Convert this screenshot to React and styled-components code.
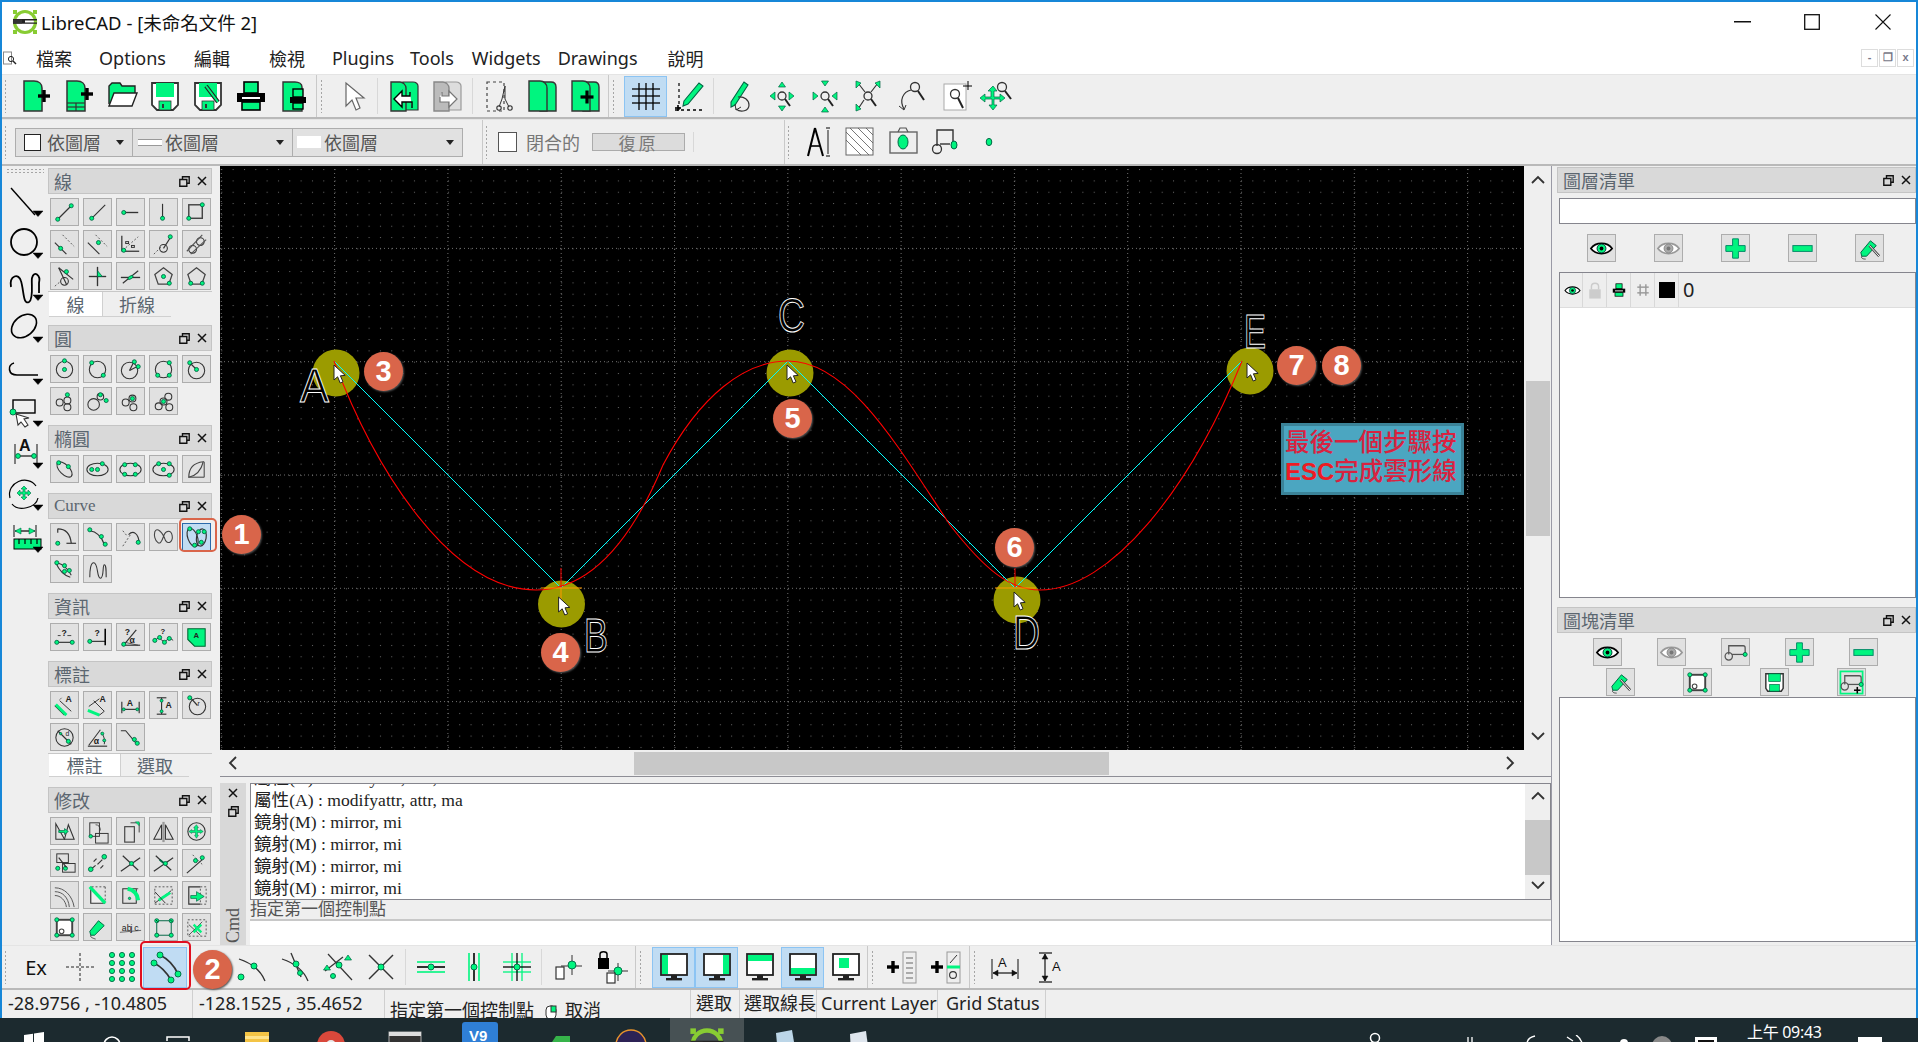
import React from 'react';
import styled, { createGlobalStyle } from 'styled-components';

const G = '#00f57f';
const K = '#333';
const g = (...c) => React.createElement('g', null, ...c);
const l = (a, b, c, e, s = K, w = 1.2, da) => <line x1={a} y1={b} x2={c} y2={e} stroke={s} strokeWidth={w} strokeDasharray={da} />;
const da = (a, b, c, e) => l(a, b, c, e, '#555', 1, '2 2');
const d = (x, y, rr = 2.1) => <circle cx={x} cy={y} r={rr} fill={G} stroke="#064" strokeWidth="0.9" />;
const o = (x, y, rr, s = K, w = 1.1, f = 'none') => <circle cx={x} cy={y} r={rr} fill={f} stroke={s} strokeWidth={w} />;
const e = (x, y, a, b, rot = 0, s = K, w = 1.1, f = 'none') => <ellipse cx={x} cy={y} rx={a} ry={b} fill={f} stroke={s} strokeWidth={w} transform={`rotate(${rot} ${x} ${y})`} />;
const p = (v, s = K, w = 1.2, f = 'none') => <path d={v} stroke={s} strokeWidth={w} fill={f} />;
const r = (x, y, a, b, f = 'none', s = K, w = 1, dash) => <rect x={x} y={y} width={a} height={b} fill={f} stroke={s} strokeWidth={w} strokeDasharray={dash} />;
const t = (x, y, v, z = 9, f = '#222', b = 700) => <text x={x} y={y} fontSize={z} fill={f} fontWeight={b} fontFamily="Liberation Sans, sans-serif">{v}</text>;
const plus = (x, y, q = 6, w = 3.4, c = '#000') => g(r(x - q, y - w / 2, 2 * q, w, c, 'none'), r(x - w / 2, y - q, w, 2 * q, c, 'none'));
const pent = 'M14 5l9 7-3.5 10h-11L5 12z';
const eye = (on = true) => g(p('M3 14c5-7 17-7 22 0-5 7-17 7-22 0z', on ? '#000' : '#999', 1.8, '#fff'), o(14, 14, 4.6, on ? '#033' : '#888', 1, on ? G : '#aaa'), o(14, 14, 2, 'none', 0, on ? '#000' : '#777'));
const plusG = g(p('M11 4h6v7h7v6h-7v7h-6v-7H4v-6h7z', '#086', 1, G));
const minusG = r(4, 11, 20, 6, G, '#086');
const penG = g(p('M5 18l10-12 6 5-10 11H6z', '#064', 1, G), p('M6 22c-1 2 1 3 4 3', '#444', 1), l(14, 11, 24, 22, '#444', 2.6), l(14, 11, 24, 22, '#fff', 1));
const corners = g(r(6, 6, 16, 16, '#fff', '#444', 2), o(11, 18, 2.4, '#444'), d(6, 6), d(22, 6), d(6, 22), d(22, 22));
const block = g(p('M7 16V7h15q2 0 2 2v7', '#555', 1.3), l(10, 16, 23, 16, '#555', 1.3), o(7, 18, 3.8, '#555', 1.3), d(24, 16));

const small = {
  l1: g(l(7, 21, 21, 7), d(7, 21), d(21, 7)),
  l2: g(l(8, 20, 22, 6), d(8, 20)),
  l3: g(l(7, 14, 22, 14, K, 1.4), d(7, 14)),
  l4: g(l(13, 5, 13, 20), d(13, 20)),
  l5: g(r(6, 6, 14, 14, 'none', '#444', 1.5), d(6, 20), d(20, 6)),
  l6: g(l(4, 12, 16, 24), da(12, 4, 24, 16), d(10, 18)),
  l7: g(l(4, 12, 16, 24), da(12, 4, 24, 16), d(15, 12)),
  l8: g(l(5, 5, 5, 21, K, 1.3), l(5, 21, 23, 21, K, 1.3), da(6, 20, 22, 6), d(7, 20), r(9, 11, 3, 2), r(15, 15, 3, 2)),
  l9: g(da(4, 24, 12, 16), o(14, 18, 4), l(14, 18, 21, 7), d(21, 6)),
  l10: g(o(10, 19, 4), o(18, 11, 4), l(4, 21, 20, 4, '#555'), l(8, 24, 24, 9, '#555')),
  l11: g(da(4, 24, 10, 19), o(14, 19, 4), l(8, 5, 23, 17), l(8, 5, 16, 22), d(16, 9)),
  l12: g(l(5, 14, 23, 14, K, 1.4), l(14, 4, 14, 24, K, 1.4), p('M14 8l5 6h-5z', '#064', 0.8, G)),
  l13: g(l(4, 15, 24, 15, K, 1.4), l(6, 21, 22, 8, K, 1.2), e(14, 15, 3, 1.5, -30, '#064', .8, G)),
  l14: g(p(pent, '#444', 1.3), d(14, 14), d(20, 21)),
  l15: g(p(pent, '#444', 1.3), d(8, 21), d(20, 21)),
  c1: g(o(14, 14, 8.5), d(14, 5), d(14, 14)),
  c2: g(o(14, 14, 8.5), d(8, 7), d(20, 20)),
  c3: g(o(13, 15, 8.5), l(13, 15, 17, 7), l(13, 15, 21, 11), d(18, 6), d(22, 11)),
  c4: g(o(14, 14, 8.5), d(20, 7), d(8, 20), d(20, 20)),
  c5: g(o(14, 15, 8.5), l(7, 7, 14, 14), d(7, 7), d(14, 14)),
  c6: g(o(9, 15, 3.6), o(17, 13, 3.6), o(17, 20, 3.6), d(17, 7)),
  c7: g(o(10, 17, 6), o(17, 9, 3.4), d(17, 7), d(23, 13)),
  c8: g(o(9, 15, 3.6), o(16, 11, 3.6), o(17, 20, 3.6), d(16, 11)),
  c9: g(o(9, 19, 3.6), o(19, 9, 3.6), o(20, 20, 3.6), o(14, 14, 3.6), d(14, 14)),
  e1: g(e(14, 14, 10, 5, 45), d(8, 7), d(18, 11)),
  e2: g(e(14, 14, 11, 6.5), d(8, 14), d(19, 8), d(14, 14)),
  e3: g(e(14, 14, 11, 6.5), d(8, 9), d(19, 9), d(8, 19), d(19, 19)),
  e4: g(e(14, 14, 11, 6.5), d(9, 8), d(20, 8), d(14, 14), d(20, 20)),
  e5: g(p('M6 22c0-10 6-15 15-16-2 8-6 14-15 16z', '#444', 1.2), l(6, 22, 22, 22, '#555'), l(22, 6, 22, 22, '#555')),
  u1: g(p('M7 5c8 0 13 5 14 15', K, 1.2), l(16, 20, 26, 20), d(7, 20), l(7, 5, 7, 9)),
  u2: g(p('M6 7c8 1 12 6 15 14', K, 1.2), d(6, 6), d(18, 13), d(22, 21)),
  u3: g(da(6, 23, 14, 11), p('M12 11c5-5 10-1 11 8', K, 1.2), da(6, 7, 11, 13), d(22, 19)),
  u4: g(p('M5 8c2-5 8 0 11 9 3 5 8 1 7-5-1-6-7-6-9 1-2 6-4 8-6 6-3-2-4-7-3-11z', '#444', 1.1)),
  u5: g(e(10, 14, 5, 10, -20, '#333', 1.2), e(19, 14, 5, 9, 10, '#333', 1.2), d(7, 5), d(16, 8), d(22, 8), d(19, 19), d(12, 22)),
  u6: g(p('M5 7c3 7 8 13 15 15M6 7c5 1 11 5 15 13', K, 1.1), d(6, 7), d(14, 10), d(19, 15), d(14, 16)),
  u7: g(p('M6 22c0-8 1-15 4-15 5 0 3 16 7 16s2-14 4-14 2 5 2 13', K, 1.1)),
  i1: g(l(6, 19, 23, 19), t(11, 12, '?', 9), l(7, 12, 10, 12, K, .9), l(17, 12, 21, 12, K, .9), d(6, 19), d(22, 19)),
  i2: g(l(6, 18, 22, 18), l(22, 5, 22, 22, '#000', 1.6), t(11, 12, '?', 9), d(6, 18)),
  i3: g(l(5, 22, 24, 22), l(6, 23, 20, 6), l(8, 19, 22, 22, K, .8), t(8, 11, '?', 9), t(13, 20, 'α', 9), d(7, 21)),
  i4: g(p('M4 18l5-4 6 5 5-5 4 3', K, 1), t(11, 10, '?', 8), d(5, 17), d(10, 14), d(15, 19), d(20, 15)),
  i5: g(p('M5 5h18v18H12l-7-7z', '#063', 1.1, G), t(11, 15, 'A', 8)),
  m1: g(l(4, 14, 14, 24, K, 1.2), p('M5 13l11 11', G, 3), l(9, 9, 21, 20, K, 1), t(15, 10, 'A', 9), l(11, 6, 9, 8, K, .7)),
  m2: g(p('M4 19l12 5', G, 3), p('M5 15l11-8', K, 1), l(10, 9, 21, 20, K, 1), t(16, 10, 'A', 9), l(21, 20, 16, 24, K, 1)),
  m3: g(l(5, 10, 5, 22), l(23, 10, 23, 22), l(6, 18, 22, 18), t(10, 14, 'A', 9), d(7, 18, 1.5), d(21, 18, 1.5)),
  m4: g(l(7, 6, 17, 6), l(7, 23, 17, 23), l(12, 6, 12, 23), t(16, 17, 'A', 9), d(12, 9, 1.5), d(12, 20, 1.5)),
  m5: g(o(15, 15, 8.5), l(7, 5, 15, 14), d(7, 6), t(15, 14, 'r', 7, '#222', 400)),
  m6: g(o(14, 14, 9), l(7, 7, 21, 21), d(18, 18), t(15, 12, 'd', 7, '#222', 400), d(10, 10, 1.2)),
  m7: g(l(4, 23, 24, 23, K, 1.2), l(5, 22, 17, 6, K, 1.1), p('M18 9c3 3 4 9 3 12', K, 1), t(10, 21, 'α', 9), d(19, 10, 1.5), d(21, 17, 1.5)),
  m8: g(p('M4 7h5l10 12', K, 1.1), d(18, 16), d(21, 20)),
  x1: g(p('M5 6v16h9z', K, 1.1), p('M14 22h10L18 7z', K, 1.1), p('M8 13h6v-2l4 3-4 3v-2H8z', '#064', .7, G)),
  x2: g(r(6, 5, 10, 14, 'none'), r(12, 16, 13, 10, 'none'), p('M12 7c3 0 5 2 5 6', K, .8), d(7, 19, 1.8)),
  x3: g(r(8, 9, 10, 16, 'none', '#444', 1.2), p('M14 5h9v10', '#444', 1), p('M19 4h4v4z', '#064', .5, G)),
  x4: g(p('M4 22L12 7v15z', K, 1.1), p('M24 22L16 7v15z', K, 1.1), l(14, 4, 14, 25, '#999', 2.4)),
  x5: g(o(14, 14, 9), p('M14 7l2 3h-1v3h3v-1l3 2-3 2v-1h-3v3h1l-2 3-2-3h1v-3H9v1l-3-2 3-2v1h3v-3h-1z', '#064', .5, G)),
  x6: g(r(6, 4, 12, 9), r(12, 14, 13, 9), d(7, 19), d(15, 19), l(8, 8, 16, 18)),
  x7: g(l(6, 21, 12, 16), d(7, 20, 2.4), d(21, 7, 2.4), l(14, 15, 19, 10), l(10, 12, 13, 9), l(17, 19, 20, 16)),
  x8: g(l(4, 22, 24, 8), l(6, 6, 22, 21), d(15, 14)),
  x9: g(l(4, 22, 24, 8), l(6, 6, 22, 21), p('M10 10l5 4', '#064', 2), d(16, 14)),
  x10: g(l(4, 24, 20, 10), da(10, 5, 21, 16), d(20, 8), d(13, 11)),
  x11: g(p('M4 10c8 0 14 6 15 16M4 14c6 0 11 5 12 12M4 6c10 0 18 8 20 20', '#555', 1)),
  x12: g(p('M7 6v16h14z', K, 1.2, '#eee'), p('M6 5l16 17', G, 3.5), da(8, 5, 22, 5), da(22, 5, 22, 20)),
  x13: g(p('M6 7h14v15H6z', K, 1.1), p('M11 7c6 1 10 5 11 12', G, 4), d(13, 17, 1.2), da(20, 7, 24, 7)),
  x14: g(r(5, 5, 18, 18, 'none', '#555', 1, '2 2'), l(5, 22, 22, 9, K, 1), p('M9 19l12-8', G, 3), l(5, 10, 16, 22, K, 1)),
  x15: g(p('M18 5H6v18h12', K, 1.2), r(18, 5, 6, 18, 'none', '#555', 1, '2 2'), p('M8 14h6v-4l8 5-8 5v-3H8z', '#064', .7, G)),
  x16: corners,
  x17: g(p('M6 18l9-11 6 5-10 10H7z', '#064', 1, G), p('M7 22c-1 2 2 3 5 4', '#444', 1)),
  x18: g(l(3, 19, 25, 17, '#666', 1), t(5, 18, 'a', 9, '#222', 400), t(10, 18, 'b', 9, '#222', 400), t(14, 18, 'j', 9, '#222', 400), t(18, 18, 'c', 9, '#222', 400)),
  x19: g(r(7, 7, 15, 15, 'none', '#064', 1), d(7, 7), d(22, 7), d(7, 22), d(22, 22), l(6, 6, 8, 8, '#000', .8), l(21, 6, 23, 8, '#000', .8)),
  x20: g(r(5, 6, 19, 17, 'none', '#555', 1, '2 2'), l(6, 22, 20, 8, K, .8), l(6, 11, 18, 22, K, .8), l(11, 11, 19, 19, G, 2.4), l(19, 11, 11, 19, G, 2.4)),
  eye: eye(true),
  eyeOff: eye(false),
  plus: plusG,
  minus: minusG,
  pen: penG,
  block,
  corners,
  save: g(p('M5 5h18v15l-2 3H7l-2-3z', '#333', 1.5, '#fff'), r(8, 5, 12, 8, G, '#064', .7), r(9, 16, 10, 7, G, '#064', .7)),
  blockAdd: g(r(2.5, 2.5, 23, 23, 'none', G, 1.8), block, plus(20, 22, 3.4, 1.6)),
};

const docP = 'M6 3h10c5 0 8 3 8 7v23H6z';
const floppy = g(p('M5 5h26v22l-5 5H10l-5-5z', '#333', 1.8, '#fff'), r(9, 5, 18, 14, G, 'none'), r(12, 23, 12, 9, G, '#333', .8), r(15, 26, 2, 4, '#333', 'none'));
const printer = g(r(11, 4, 14, 11, G, '#000', 1.6), r(4, 15, 28, 9, '#000', 'none'), r(9, 19, 18, 2, '#fff', 'none'), r(9, 24, 18, 8, G, '#000', 1.6));
const mag = (x, y, a = 1) => g(o(x, y, 4, '#333', 1.3), l(x + 3, y + 3, x + 8 * a, y + 10 * a, '#222', 2));
const tri = (x, y, c = '#064') => p(`M${x} ${y - 4}l3.5 5h-7z`, c, .7, G);

const top = {
  new: g(p(docP, '#333', 1.5, G), plus(26, 18)),
  tpl: g(p(docP, '#333', 1.5, G), plus(26, 16), l(6, 25, 24, 25), l(6, 29, 24, 29), l(15, 25, 15, 33)),
  open: g(p('M5 26V8l3-3h8l2 3h13v8', '#222', 1.4, G), p('M5 28l5-13h23l-5 13z', '#222', 1.4, '#fff')),
  save: floppy,
  saveAs: g(floppy, l(16, 8, 28, 24, '#222', 4), l(16, 8, 28, 24, G, 2)),
  print: printer,
  preview: g(p('M7 4h12c4 0 7 2 7 5v24H7z', '#333', 1.4, G), g(r(17, 11, 10, 8, G, '#000', 1.4), r(14, 19, 16, 6, '#000', 'none'), r(17, 25, 10, 6, G, '#000', 1.4))),
  pointer: p('M12 5v23l6-6 4 10 4-2-4-10h8z', '#666', 1.2, '#fff'),
  cpy: g(p('M17 4h10c3 0 5 2 5 4v24H17z', '#333', 1.2, G), p('M5 4h9c3 0 6 3 6 6v23H5z', '#333', 1.4, G), p('M24 14v4h-8v-5l-8 8 8 8v-5h10v6', '#000', 1.4, '#fff')),
  pst: g(p('M17 4h10c3 0 5 2 5 4v24H17z', '#999', 1.2, '#ddd'), p('M5 4h9c3 0 6 3 6 6v23H5z', '#888', 1.4, '#bbb'), p('M13 14v4h7v-5l8 8-8 8v-5h-9v-5', '#777', 1.2, '#fff')),
  cut: g(r(6, 4, 17, 29, 'none', '#444', 1.2, '3 3'), p('M24 8v13l4 8M24 8l-3 13-3 8', '#333', 1), o(18, 30, 2.2), o(29, 30, 2.2)),
  dup: g(p('M16 4h11c3 0 5 2 5 5v24H16z', '#333', 1.4, G), p('M5 3h11c4 0 7 3 7 7v23H5z', '#333', 1.4, G)),
  dupP: g(p('M16 4h11c3 0 5 2 5 5v24H16z', '#333', 1.4, G), p('M5 3h11c4 0 7 3 7 7v23H5z', '#333', 1.4, G), plus(20, 19, 6.5, 3.2)),
  grid: g(...[11, 18, 25].map(x => l(x, 5, x, 32, '#000', 1.3)), ...[11, 18, 25].map(y => l(4, y, 32, y, '#000', 1.3))),
  draft: g(l(8, 5, 8, 32, '#000', 1.2, '3 3'), l(4, 32, 32, 32, '#000', 1.6, '3 3'), p('M13 23L28 5l4 3-15 18-5 2z', '#064', 1.1, G), plus(7, 30, 3, 1.6)),
  redraw: g(p('M10 24L23 4l4 3-13 20-4 2z', '#064', 1.1, G), p('M17 19c6-1 11 3 11 8 0 6-8 8-13 4', '#333', 1.2), p('M14 26l1 6 5-3', K, 1)),
  zin: g(mag(18, 18), tri(18, 8), p('M18 33l-3.5-5h7z', '#064', .7, G), p('M6 18l5-4v8z', '#064', .7, G), p('M30 18l-5-4v8z', '#064', .7, G)),
  zout: g(mag(18, 18), p('M18 8l-3.5-5h7z', '#064', .7, G), tri(18, 33), p('M11 18l-5-4v8z', '#064', .7, G), p('M25 18l5-4v8z', '#064', .7, G)),
  zauto: g(mag(18, 18), l(15, 14, 8, 5), l(21, 14, 28, 5), l(14, 22, 8, 31), p('M6 3v7l5-5z', '#064', .7, G), p('M30 3v7l-5-5z', '#064', .7, G), p('M6 33v-7l5 5z', '#064', .7, G)),
  zprev: g(o(22, 9, 4.5, K, 1.3), l(25, 13, 31, 22, '#222', 2), p('M18 12C10 14 6 22 11 31', K, 1.2), p('M6 28l5 4 2-5', K, 1)),
  zwin: g(r(8, 6, 22, 26, '#fff', '#aaa', 1), o(19, 16, 4.5, K, 1.3), l(22, 20, 27, 30, '#222', 2), l(27, 8, 36, 8, '#000', 1), l(32, 3, 32, 12, '#000', 1)),
  zpan: g(o(23, 9, 4.5, K, 1.3), l(26, 13, 32, 21, '#222', 2), p('M14 8l4 5h-3v6h6v-3l5 4-5 4v-3h-6v6h3l-4 5-4-5h3v-6H6v3l-5-4 5-4v3h6v-6H9z', '#064', .7, G)),
  text: g(l(9, 32, 16, 4, '#000', 2), l(24, 32, 16, 4, '#000', 2), l(12, 22, 21, 22, '#000', 1.6), l(29, 6, 29, 30, '#555', 1.4), r(27, 3, 4, 2, '#777', 'none'), r(27, 31, 4, 2, '#777', 'none')),
  hatch: g(r(4, 4, 27, 27, '#fff', '#666', 1), ...[-12, -4, 4, 12, 20].map(k => l(Math.max(4, 4 + k), Math.max(4, 4 - k), Math.min(31, 31 + k), Math.min(31, 31 - k), '#555', .8))),
  img: g(r(5, 8, 27, 21, '#eee', '#666', 1.4), e(18, 18, 5, 7, 0, '#064', 1, G), p('M13 8l2-4h6l2 4', '#555', 1.2)),
  ins: g(p('M9 22V6h16v14', K, 1.4), l(12, 20, 22, 20, K, 1.4), o(9, 25, 4.5, K, 1.3), e(26, 21, 3, 4, 0, '#064', 1, G)),
  point: e(18, 18, 2.8, 3.6, 0, '#064', 1, G),
  cross: g(l(4, 18, 32, 18, '#222', 1, '3 2'), l(18, 4, 18, 32, '#222', 1, '3 2')),
  snapGrid: g(...[8, 18, 28].flatMap(x => [6, 14, 22, 30].map(y => d(x, y, 2.6)))),
  snapEnd: g(p('M13 6c8 4 14 10 18 19M7 14c8 4 13 10 17 17', '#333', 1.7), d(13, 6, 3), d(7, 14, 3), d(31, 25, 3), d(24, 31, 3)),
  snapFree: g(p('M12 30c4-6 6-10 16-16', K, 1.3), d(27, 10, 3), d(9, 30, 3)),
  snapOn: g(p('M5 10c12 4 22 12 26 22', K, 1.3), d(20, 17, 3), d(7, 28, 3)),
  snapCen: g(p('M5 10c12 4 22 12 26 22', K, 1.3), l(14, 4, 24, 28, K, 1.3), d(19, 15, 3), d(23, 24, 2.5)),
  snapMid: g(p('M8 5l24 26', K, 1.2), p('M5 22l18-14', K, 1.2), d(19, 16, 3), d(13, 27, 2.5), tri(28, 10), tri(7, 20)),
  snapX: g(l(6, 6, 30, 30, K, 1.4), l(30, 6, 6, 30, K, 1.4), d(18, 18, 3)),
  rH: g(l(4, 13, 32, 13, G, 1.6), l(4, 23, 32, 23, G, 1.6), l(4, 18, 32, 18, '#000', 1.6), d(18, 18, 3)),
  rV: g(l(13, 4, 13, 32, G, 1.6), l(23, 4, 23, 32, G, 1.6), l(18, 4, 18, 32, '#000', 1.6), d(18, 18, 3)),
  rC: g(l(4, 13, 32, 13, G, 1.3), l(4, 23, 32, 23, G, 1.3), l(13, 4, 13, 32, G, 1.3), l(23, 4, 23, 32, G, 1.3), l(4, 18, 32, 18, '#000', 1.3), l(18, 4, 18, 32, '#000', 1.3), d(18, 18, 3)),
  rel: g(l(22, 6, 22, 26, K, 1), l(11, 17, 32, 17, K, 1), d(22, 16, 4), r(6, 18, 8, 12, '#fff', K, 1.2)),
  relLock: g(r(4, 9, 11, 11, '#000', 'none'), p('M6 9V5c0-3 7-3 7 0v4', '#000', 1.5), l(24, 14, 24, 32, K, 1), l(14, 22, 34, 22, K, 1), d(24, 22, 4), r(13, 24, 8, 10, '#fff', K, 1.2)),
  addCol: g(plus(10, 18), r(20, 3, 13, 31, '#eee', '#999', 1), ...[9, 14, 19, 24, 29].map(y => l(23, y, 30, y, '#666', 1))),
  addRow: g(plus(10, 18), r(20, 3, 13, 31, '#eee', '#999', 1), l(23, 14, 30, 6, K, 1), o(26, 26, 3.4), l(20, 18, 33, 18, G, 3)),
  dimH: g(l(6, 10, 6, 30), l(32, 10, 32, 30), l(7, 24, 31, 24, '#111', 1.2), t(12, 18, 'A', 13, '#111', 400), p('M7 24l5-3v6z', '#111', .5, '#111'), p('M31 24l-5-3v6z', '#111', .5, '#111')),
  dimV: g(l(9, 4, 22, 4, '#111'), l(9, 33, 22, 33, '#111'), l(15, 5, 15, 32, '#111'), t(22, 22, 'A', 13, '#111', 400), p('M15 5l-3 5h6z', '#111', .5, '#111'), p('M15 32l-3-5h6z', '#111', .5, '#111')),
};
const mon = (x, y, a, b) => g(r(5, 5, 26, 21, '#fff', '#222', 1.8), r(x, y, a, b, G, 'none'), r(15, 26, 6, 3, '#222', 'none'), r(10, 29, 16, 2.4, '#222', 'none'));
const mons = [mon(6, 6, 6, 19), mon(24, 6, 6, 19), mon(6, 6, 24, 6), mon(6, 19, 24, 6), mon(11, 9, 10, 10)];

const big = (c) => g(c, p('M31 29h10l-5 5.5z', '#000', .5, '#000'));
const sideIcons = [
  big(l(9, 6, 33, 33, '#000', 1.4)),
  big(o(22, 18, 13, '#000', 1.8)),
  big(p('M9 21c-2-12 8-14 10-6 3 10 2 24 8 21 5-3 2-20 3-24 2-8 9-3 7 5v10', '#000', 1.8)),
  big(e(22, 18, 14, 10, -40, '#000', 1.6)),
  big(p('M36 25H15C6 25 5 15 12 13', '#000', 1.6)),
  big(g(r(11, 8, 22, 13, 'none', '#000', 1.4), d(11, 20, 3), p('M14 22l2 11 3-3 4 5 3-2-4-6 5-1z', '#333', 1.1, '#fff'))),
  big(g(t(17, 17, 'A', 16, '#111', 700), l(13, 10, 13, 30), l(35, 10, 35, 30), l(14, 22, 34, 22, '#111'), d(16, 22, 2.4), d(32, 22, 2.4))),
  big(g(p('M8 22C4 6 26-2 34 10', '#000', 1.2), p('M36 22c-2 10-20 14-26 6', '#000', 1.2), p('M22 10l3 3h-2v3h3v-2l3 3-3 3v-2h-3v3h2l-3 3-3-3h2v-3h-3v2l-3-3 3-3v2h3v-3h-2z', '#064', .6, G))),
  big(g(l(12, 7, 12, 19), l(34, 7, 34, 19), l(13, 13, 33, 13, '#000'), p('M13 13l6-3v6z', '#064', .6, G), p('M33 13l-6-3v6z', '#064', .6, G), r(12, 21, 27, 10, G, '#000', 1), l(17, 21, 17, 26, '#000'), l(23, 21, 23, 26, '#000'), l(29, 21, 29, 26, '#000'), l(35, 21, 35, 26, '#000'))),
];

const Global = createGlobalStyle`
  html, body { margin: 0; padding: 0; overflow: hidden; background: #efefef; }
  body { font-family: "Noto Sans", "Noto Sans CJK TC", sans-serif; }
  svg { display: block; }
`;
const Root = styled.div`position: relative; width: 1918px; height: 1042px; display: flex; flex-direction: column; overflow: hidden;`;
const Win = styled.div`flex: 1; min-height: 0; display: flex; flex-direction: column; box-sizing: border-box; background: #efefef;
  border-top: 2px solid #1787d8; border-left: 2px solid #1787d8; border-right: 2px solid #1787d8;`;
const TitleBar = styled.div`height: 40px; background: #fff; display: flex; align-items: center; padding-left: 10px; font-size: 18.5px; color: #111;`;
const TitleText = styled.span`margin-left: 3px; flex: 1;`;
const WinBtn = styled.div`width: ${x => x.$w}px; height: 40px; display: flex; align-items: center; justify-content: center;`;
const MenuBar = styled.div`height: 32px; background: #fff; display: flex; align-items: center; font-size: 18px; color: #222; position: relative;`;
const MenuIcon = styled.div`width: 16px; height: 16px; margin-left: 1px;`;
const MenuItem = styled.span`margin-left: ${x => x.$m}px; white-space: nowrap;`;
const MdiBox = styled.div`display: flex; margin-left: auto; margin-right: 2px; gap: 1px;`;
const MdiBtn = styled.div`width: 15px; height: 16px; border: 1px solid #ddd; font: 700 11px "Liberation Sans", sans-serif; color: #778; text-align: center; line-height: 15px;`;
const Toolbar = styled.div`height: ${x => x.$h}px; box-sizing: border-box; display: flex; align-items: center; background: #efefef; border-top: 1px solid #e4e4e4; border-bottom: 2px solid #b9b9b9;`;
const Grip = styled.div`width: 4px; height: ${x => x.$h || 34}px; margin: 0 ${x => x.$r ?? 4}px 0 ${x => x.$l ?? 2}px;
  background-image: radial-gradient(circle, #a5a5a5 1px, transparent 1.1px); background-size: 3px 4px; flex: none;`;
const Div = styled.div`width: 1px; height: ${x => x.$h || 36}px; background: #d8d8d8; margin: 0 ${x => x.$m ?? 4}px; flex: none;`;
const End = styled.div`width: 1px; align-self: stretch; background: #c9c9c9; margin-left: ${x => x.$l ?? 0}px; flex: none;`;
const TB = styled.div`width: ${x => x.$w || 43}px; height: 41px; flex: none; box-sizing: border-box; display: flex; align-items: center; justify-content: center; font-size: 20px; color: #111;
  background: ${x => x.$on ? '#c0dcf3' : 'transparent'}; border: 1px solid ${x => x.$on ? '#8cc4f3' : 'transparent'};`;
const Combo = styled.div`width: ${x => x.$w}px; height: 29px; box-sizing: border-box; background: #e1e1e1; border: 1px solid #adadad; display: flex; align-items: center; font-size: 18px; color: #555; position: relative; margin-left: -1px;`;
const Swatch = styled.div`margin-left: ${x => x.$l}px; margin-right: ${x => x.$r}px; width: ${x => x.$w}px; height: ${x => x.$h}px; background: #fff; border: ${x => x.$b ? '1px solid #222' : 'none'}; border-top: ${x => x.$line ? '1px solid #999' : ''}; border-bottom: ${x => x.$line ? '1px solid #999' : ''}; flex: none;`;
const Caret = styled.div`position: absolute; right: 8px; top: 11px; width: 0; height: 0; border: 4px solid transparent; border-top: 5px solid #222; border-bottom: 0;`;
const Check = styled.div`width: 19px; height: 20px; background: #fff; border: 1px solid #555; box-sizing: border-box; margin-left: 3px;`;
const DimLabel = styled.span`font-size: 18px; color: #777; margin-left: 9px;`;
const DimBtn = styled.div`width: 93px; height: 18px; box-sizing: border-box; margin-left: 12px; background: #dcdcdc; border: 1px solid #ababab; color: #7a7a7a; font-size: 17px; display: flex; align-items: center; justify-content: center; letter-spacing: 3px;`;

const Main = styled.div`flex: 1; min-height: 0; display: flex;`;
const SideBar = styled.div`width: 46px; flex: none; padding-top: 2px; box-sizing: border-box;`;
const SideGrip = styled.div`height: 5px; margin: 0 4px 9px; background-image: radial-gradient(circle, #a5a5a5 1px, transparent 1.1px); background-size: 4px 3px;`;
const SideItem = styled.div`height: 42px;`;
const Dock = styled.div`width: 172px; flex: none; padding: 2px 8px 0 0; box-sizing: border-box; overflow: hidden;`;
const Sect = styled.div`margin-bottom: ${x => x.$tab ? 0 : 10}px; `;
const Head = styled.div`height: 26px; flex: none; box-sizing: border-box; margin-top: ${x => x.$mt || 0}px; background: #d9d9d9; border: 1px solid #c4c4c4; display: flex; align-items: center; padding: 0 4px 0 5px;`;
const HeadText = styled.span`flex: 1; font-size: 18px; color: #5b6670; white-space: nowrap; font-family: ${x => x.$serif ? '"Liberation Serif", serif' : 'inherit'}; ${x => x.$serif ? 'font-size: 17px;' : ''}`;
const HeadBtns = styled.div`display: flex; gap: 7px; align-items: center;`;
const ToolGrid = styled.div`display: grid; grid-template-columns: repeat(5, 29px); gap: 4px; padding: 4px 0 0 2px; grid-auto-rows: 28px;`;
const ToolBtn = styled.div`width: 29px; height: 28px; flex: none; box-sizing: border-box; background: ${x => x.$on ? '#c0dcf3' : '#e1e1e1'}; border: 1px solid ${x => x.$on ? '#2a69aa' : '#adadad'}; display: flex; align-items: center; justify-content: center; overflow: hidden;`;
const Tabs = styled.div`display: flex; height: ${x => x.$h}px; margin: ${x => x.$mt}px 0 ${x => x.$mb}px 0; border-top: 1px solid #c8c8c8; width: 164px; box-sizing: border-box;`;
const Tab = styled.div`width: ${x => x.$w}px; box-sizing: border-box; margin-left: ${x => x.$on ? 1 : 0}px; display: flex; align-items: center; justify-content: center; font-size: 18px; color: #5b6670; white-space: nowrap;
  background: ${x => x.$on ? '#fff' : 'transparent'}; border-bottom: 1px solid #d0d0d0; border-right: ${x => x.$on ? '1px solid #d0d0d0' : 'none'};`;

const Center = styled.div`width: 1331px; flex: none; display: flex; flex-direction: column;`;
const CanvasRow = styled.div`height: 584px; display: flex;`;
const Canvas = styled.div`width: 1304px; background: #000; position: relative; overflow: hidden;`;
const VScroll = styled.div`width: 27px; background: #efefef; position: relative; display: flex; flex-direction: column; align-items: center; justify-content: space-between; padding: 9px 0 5px; box-sizing: border-box;`;
const VThumb = styled.div`position: absolute; left: 2px; right: 1px; top: ${x => x.$t}px; height: ${x => x.$h}px; background: #c8c8c8;`;
const HScroll = styled.div`height: 27px; box-sizing: border-box; border-bottom: 1px solid #8e8e96; display: flex; align-items: center; justify-content: space-between; padding: 0 32px 0 8px; position: relative;`;
const HThumb = styled.div`position: absolute; left: 414px; width: 475px; top: 2px; bottom: 1px; background: #c8c8c8;`;
const Cmd = styled.div`flex: 1; margin-top: 6px; display: flex; min-height: 0;`;
const CmdStrip = styled.div`width: 26px; background: #d8d8d8; margin-right: 4px; position: relative; display: flex; flex-direction: column; align-items: center; padding-top: 5px; gap: 8px; flex: none;`;
const CmdLabel = styled.span`position: absolute; bottom: 2px; left: 3px; writing-mode: vertical-rl; transform: rotate(180deg); font: 18px "Liberation Serif", serif; color: #555;`;
const CmdBody = styled.div`flex: 1; display: flex; flex-direction: column; min-width: 0;`;
const Hist = styled.div`height: 117px; box-sizing: border-box; background: #fff; border: 1px solid #85858d; position: relative; overflow: hidden; padding-left: 3px;`;
const HistLines = styled.div`margin-top: -17px;`;
const HistLine = styled.div`font: 17.6px/22px "Liberation Serif", "Noto Sans CJK TC", serif; height: 22px; color: #222; white-space: pre;`;
const HistScroll = styled.div`position: absolute; right: 0; top: 0; bottom: 0; width: 25px; background: #efefef; display: flex; flex-direction: column; align-items: center; justify-content: space-between; padding: 7px 0 5px; box-sizing: border-box;`;
const HistThumb = styled.div`position: absolute; left: 0; right: 0; top: 36px; height: 55px; background: #c8c8c8;`;
const CmdPrompt = styled.div`height: 19px; line-height: 17px; font-size: 17px; color: #555; border-bottom: 2px solid #c8c8c8; white-space: nowrap;`;
const CmdInput = styled.div`flex: 1; background: #fff;`;

const Right = styled.div`flex: 1; min-width: 0; border-left: 1px solid #9a9aa6; padding: 1px 0 3px 5px; display: flex; flex-direction: column; box-sizing: border-box;`;
const RowBtns = styled.div`display: flex; gap: ${x => x.$gap}px; padding: ${x => x.$p}; height: ${x => x.$hh}px; flex: none; box-sizing: border-box;`;
const FieldBox = styled.div`height: ${x => x.$h}px; flex: ${x => x.$grow ? '1' : 'none'}; box-sizing: border-box; margin: ${x => x.$mt || 0}px 0 0 2px; background: #fff; border: 1px solid #85858d;`;
const LayerRow = styled.div`height: 34px; background: #eee; border-bottom: 1px solid #ddd; display: flex; font-size: 20px; color: #222; line-height: 34px;`;
const LayerCell = styled.div`width: ${x => x.$w || 24}px; box-sizing: border-box; border-right: 1px solid #d8d8d8; display: flex; align-items: center; justify-content: ${x => x.$end ? 'flex-end' : 'center'};`;
const LayerName = styled.span`margin-left: 4px;`;
const Color = styled.div`width: 16px; height: 16px; background: #000;`;

const Status = styled.div`height: 28px; display: flex; font-size: 18px; color: #222; overflow: hidden; line-height: 26px; white-space: nowrap;`;
const Cell = styled.div`width: ${x => x.$w}px; flex: none; box-sizing: border-box; border-right: ${x => x.$nb ? 'none' : '1px solid #cfcfcf'}; padding-left: ${x => x.$p}px; padding-top: ${x => x.$t || 0}px;`;
const MouseGlyph = styled.span`display: inline-block; margin: 0 6px 0 9px; vertical-align: middle;`;

const Taskbar = styled.div`height: 24px; background: #1c2a2f; display: flex; overflow: hidden; color: #fff;`;
const Slot = styled.div`width: ${x => x.$w}px; height: 24px; flex: none; display: flex; justify-content: center; padding-top: ${x => x.$t ?? 12}px; box-sizing: border-box; background: ${x => x.$on ? '#475154' : 'transparent'};`;
const Clock = styled.div`width: 100px; height: 24px; flex: none; font-size: 16px; line-height: 22px; padding: 3px 0 0 9px; box-sizing: border-box; letter-spacing: -.3px;`;

const Badge = styled.div`position: absolute; left: ${x => x.$x - 20}px; top: ${x => x.$y - 20}px; width: 39px; height: 39px; border-radius: 50%; background: #d9654a; color: #fff;
  font: 700 29px/39px "Liberation Sans", sans-serif; text-align: center; box-shadow: 1px 1px 2px #555;`;
const Mark = styled.div`position: absolute; box-sizing: border-box; left: ${x => x.$x}px; top: ${x => x.$y}px; width: ${x => x.$w}px; height: ${x => x.$h}px; border: 2px solid ${x => x.$c}; border-radius: 5px;`;
const Note = styled.div`position: absolute; left: 1061px; top: 257px; width: 183px; height: 72px; box-sizing: border-box; background: #4ba6c1; border: 3px solid #3b8398; color: #d92240; font-size: 24.5px; line-height: 29px; font-weight: 500; padding: 1px 0 0 1px; white-space: nowrap;`;
const Esc = styled.span`font: 700 24px "Liberation Sans", sans-serif; color: #ed1c24;`;

const Svg = ({ s = 36, v = 36, c }) => <svg width={s} height={s} viewBox={`0 0 ${v} ${v}`}>{c}</svg>;
const Tool = ({ n, on }) => <ToolBtn $on={on}><Svg s={27} v={28} c={small[n]} /></ToolBtn>;
const FloatIcon = () => <svg width="11" height="11" viewBox="0 0 11 11"><path d="M3.5 3V.8h6.7v6.4H8M.8 3.5h7v6.7H.8z M.8 3.5h7" fill="none" stroke="#111" strokeWidth="1.4" /></svg>;
const CloseIcon = () => <svg width="10" height="10" viewBox="0 0 10 10"><path d="M1 1l8 8M9 1l-8 8" stroke="#111" strokeWidth="1.5" /></svg>;
const Chev = ({ dir }) => {
  const m = { u: 'M1 8l6-6 6 6', d: 'M1 2l6 6 6-6', l: 'M8 1L2 7l6 6', r: 'M2 1l6 6-6 6' }[dir];
  return <svg width="14" height="14" viewBox="0 0 14 14"><path d={m} fill="none" stroke="#333" strokeWidth="1.8" /></svg>;
};
const Section = ({ title, serif, items, tabs, sel }) => (
  <Sect $tab={!!tabs}>
    <Head><HeadText $serif={serif}>{title}</HeadText><HeadBtns><FloatIcon /><CloseIcon /></HeadBtns></Head>
    <ToolGrid>{items.map(n => <Tool key={n} n={n} on={n === sel} />)}</ToolGrid>
    {tabs && <Tabs $h={tabs.h} $mt={tabs.mt} $mb={tabs.mb}>{tabs.list.map((x, i) => <Tab key={x[0]} $on={i === 0} $w={x[1]}>{x[0]}</Tab>)}</Tabs>}
  </Sect>
);
const Cursor = ({ x, y }) => <path transform={`translate(${x} ${y})`} d="M0 0v15l3.6-3.2 2.6 6.2 2.8-1.2-2.6-6 4.8-.4z" fill="#fff" stroke="#222" strokeWidth="1" />;
const Letter = ({ x, y, c, w }) => <text x={x} y={y} fontSize="49" fontFamily="Liberation Sans, sans-serif" fill="#000" stroke="#fff" strokeWidth="1" textLength={w} lengthAdjust="spacingAndGlyphs">{c}</text>;

const majorX = Array.from({ length: 12 }, (_, i) => 334.6 + (i - 1) * 113.3);
const majorY = Array.from({ length: 6 }, (_, i) => 248.4 + i * 113.3);
const CanvasArt = () => (
  <svg width="1304" height="584" viewBox="220 166 1304 584">
    <defs>
      <pattern id="dots" patternUnits="userSpaceOnUse" x="334.6" y="361.7" width="11.33" height="11.33">
        <rect width="1" height="1" fill="#6a6a6a" />
      </pattern>
    </defs>
    <rect x="220" y="165" width="1304" height="585" fill="url(#dots)" />
    {majorX.map(x => <line key={x} x1={x} y1="165" x2={x} y2="750" stroke="#707070" strokeDasharray="1 3" />)}
    {majorY.map(y => <line key={y} x1="220" y1={y} x2="1524" y2={y} stroke="#707070" strokeDasharray="1 3" />)}
    {[[336, 373], [561.5, 604], [790, 373], [1017, 600], [1250, 371]].map(([x, y]) => <circle key={x} cx={x} cy={y} r="23.5" fill="#9b9b00" />)}
    <polyline points="334,361 561,588 788,361 1015,588 1242,361" fill="none" stroke="#00ffff" strokeWidth="1" />
    <path d="M334 361C375 470 450 590 536 590C600 590 640 520 663 465C700 395 745 361 788 361C850 361 900 450 950 525C985 570 1010 590 1040 590C1110 590 1190 490 1242 361" fill="none" stroke="#f00" strokeWidth="1.1" />
    <line x1="561" y1="568" x2="561" y2="588" stroke="#f00" />
    <line x1="561" y1="588" x2="561" y2="606" stroke="#f90" />
    <line x1="541" y1="588" x2="582" y2="588" stroke="#f90" />
    <line x1="1015" y1="568" x2="1015" y2="588" stroke="#f00" />
    <line x1="995" y1="588" x2="1036" y2="588" stroke="#f90" />
    <Cursor x={334} y={365} /><Cursor x={558.6} y={597} /><Cursor x={787} y={365} /><Cursor x={1014} y={592} /><Cursor x={1247} y={363} />
    <Letter x={300} y={402} c="A" w={29} /><Letter x={584} y={652} c="B" w={24} /><Letter x={778} y={332} c="C" w={27} /><Letter x={1013} y={649} c="D" w={27} /><Letter x={1244} y={348} c="E" w={22} />
  </svg>
);
const LibreIcon = ({ s = 26 }) => (
  <svg width={s} height={s} viewBox="0 0 26 26">
    <rect x="1" y="1" width="4" height="4" fill="#8c3" /><rect x="21" y="1" width="4" height="4" fill="#8c3" /><rect x="1" y="21" width="4" height="4" fill="#8c3" /><rect x="21" y="21" width="4" height="4" fill="#8c3" />
    <circle cx="13" cy="13" r="10.5" fill="none" stroke="#8c3" strokeWidth="3.2" />
    <path d="M1 10h24v1.4H13v2h12v1.4H1z" fill="#222" /><rect x="1" y="10.5" width="9" height="4" fill="#333" />
  </svg>
);

const layers = ['l1','l2','l3','l4','l5','l6','l7','l8','l9','l10','l11','l12','l13','l14','l15'];
const data = [
  { title: '線', items: layers, tabs: { h: 26, mt: 1, mb: 8, list: [['線', 54], ['折線', 68]] } },
  { title: '圓', items: ['c1','c2','c3','c4','c5','c6','c7','c8','c9'] },
  { title: '橢圓', items: ['e1','e2','e3','e4','e5'] },
  { title: 'Curve', serif: true, items: ['u1','u2','u3','u4','u5','u6','u7'], sel: 'u5' },
  { title: '資訊', items: ['i1','i2','i3','i4','i5'] },
  { title: '標註', items: ['m1','m2','m3','m4','m5','m6','m7','m8'], tabs: { h: 24, mt: 2, mb: 10, list: [['標註', 72], ['選取', 68]] } },
  { title: '修改', items: ['x1','x2','x3','x4','x5','x6','x7','x8','x9','x10','x11','x12','x13','x14','x15','x16','x17','x18','x19','x20'] },
];
const hist = ['屬性(A) : modifyattr, attr, ma', '屬性(A) : modifyattr, attr, ma', '鏡射(M) : mirror, mi', '鏡射(M) : mirror, mi', '鏡射(M) : mirror, mi', '鏡射(M) : mirror, mi'];

export default function App() {
  return (
    <Root>
      <Global />
      <Win>
        <TitleBar>
          <LibreIcon />
          <TitleText>LibreCAD - [未命名文件 2]</TitleText>
          <WinBtn $w={62}><svg width="18" height="2"><rect width="17" height="1.5" fill="#111" /></svg></WinBtn>
          <WinBtn $w={76}><svg width="16" height="16"><rect x=".7" y=".7" width="14.6" height="14.6" fill="none" stroke="#111" strokeWidth="1.3" /></svg></WinBtn>
          <WinBtn $w={66}><svg width="16" height="16"><path d="M.5.5l15 15M15.5.5l-15 15" stroke="#111" strokeWidth="1.1" /></svg></WinBtn>
        </TitleBar>
        <MenuBar>
          <MenuIcon><svg width="14" height="16" viewBox="0 0 14 16"><rect x="0.5" y="2" width="8" height="12" fill="#fff" stroke="#888" /><circle cx="8" cy="9" r="2.6" fill="none" stroke="#222" /><path d="M10 11l3 3" stroke="#222" strokeWidth="1.4" /></svg></MenuIcon>
          <MenuItem $m={17}>檔案</MenuItem><MenuItem $m={27}>Options</MenuItem><MenuItem $m={28}>編輯</MenuItem><MenuItem $m={39}>檢視</MenuItem>
          <MenuItem $m={27}>Plugins</MenuItem><MenuItem $m={16}>Tools</MenuItem><MenuItem $m={18}>Widgets</MenuItem><MenuItem $m={17}>Drawings</MenuItem><MenuItem $m={30}>說明</MenuItem>
          <MdiBox><MdiBtn>-</MdiBtn><MdiBtn>&#x2750;</MdiBtn><MdiBtn>x</MdiBtn></MdiBox>
        </MenuBar>
        <Toolbar $h={45}>
          <Grip $r={6} />
          {['new','tpl','open','save','saveAs','print','preview'].map(n => <TB key={n}><Svg c={top[n]} /></TB>)}
          <End $l={1} />
          <Grip $l={3} $r={6} />
          <TB><Svg c={top.pointer} /></TB><Div $m={4} />
          <TB><Svg c={top.cpy} /></TB><TB><Svg c={top.pst} /></TB><Div $m={4} />
          <TB><Svg c={top.cut} /></TB><TB><Svg c={top.dup} /></TB><TB><Svg c={top.dupP} /></TB>
          <End $l={2} />
          <Grip $l={3} $r={8} />
          <TB $on><Svg c={top.grid} /></TB><TB><Svg c={top.draft} /></TB><Div $m={3} />
          {['redraw','zin','zout','zauto','zprev','zwin','zpan'].map(n => <TB key={n}><Svg c={top[n]} /></TB>)}
        </Toolbar>
        <Toolbar $h={47}>
          <Grip $r={8} />
          <Combo $w={118}><Swatch $l={8} $r={6} $w={15} $h={15} $b />依圖層<Caret /></Combo>
          <Combo $w={161}><Swatch $l={5} $r={3} $w={24} $h={5} $line />依圖層<Caret /></Combo>
          <Combo $w={171}><Swatch $l={4} $r={3} $w={24} $h={12} />依圖層<Caret /></Combo>
          <End $l={19} />
          <Grip $l={2} $r={6} />
          <Check /><DimLabel>閉合的</DimLabel><DimBtn>復原</DimBtn>
          <Div $m={8} $h={20} />
          <End $l={82} />
          <Grip $l={2} $r={4} />
          {['text','hatch','img','ins','point'].map(n => <TB key={n}><Svg c={top[n]} /></TB>)}
        </Toolbar>
        <Main>
          <SideBar>
            <SideGrip />
            {sideIcons.map((c, i) => <SideItem key={i}><svg width="46" height="42" viewBox="0 0 46 42">{c}</svg></SideItem>)}
          </SideBar>
          <Dock>{data.map(x => <Section key={x.title} {...x} />)}</Dock>
          <Center>
            <CanvasRow>
              <Canvas>
                <CanvasArt />
                <Note>最後一個步驟按<br /><Esc>ESC</Esc>完成雲形線</Note>
              </Canvas>
              <VScroll><Chev dir="u" /><VThumb $t={215} $h={155} /><Chev dir="d" /></VScroll>
            </CanvasRow>
            <HScroll><Chev dir="l" /><HThumb /><Chev dir="r" /></HScroll>
            <Cmd>
              <CmdStrip><CloseIcon /><FloatIcon /><CmdLabel>Cmd</CmdLabel></CmdStrip>
              <CmdBody>
                <Hist>
                  <HistLines>{hist.map((x, i) => <HistLine key={i}>{x}</HistLine>)}</HistLines>
                  <HistScroll><Chev dir="u" /><HistThumb /><Chev dir="d" /></HistScroll>
                </Hist>
                <CmdPrompt>指定第一個控制點</CmdPrompt>
                <CmdInput />
              </CmdBody>
            </Cmd>
          </Center>
          <Right>
            <Head><HeadText>圖層清單</HeadText><HeadBtns><FloatIcon /><CloseIcon /></HeadBtns></Head>
            <FieldBox $h={26} $mt={5} />
            <RowBtns $p="10px 0 10px 30px" $hh={48} $gap={38}>
              {['eye','eyeOff','plus','minus','pen'].map(n => <Tool key={n} n={n} />)}
            </RowBtns>
            <FieldBox $h={326}>
              <LayerRow>
                <LayerCell $end $w={23}><Svg s={19} v={28} c={small.eye} /></LayerCell>
                <LayerCell><Svg s={20} v={28} c={g(r(6, 13, 16, 13, '#ccc', 'none'), p('M9 13V9c0-6 10-6 10 0v4', '#ccc', 2))} /></LayerCell>
                <LayerCell><Svg s={16} v={36} c={top.print} /></LayerCell>
                <LayerCell><Svg s={20} v={28} c={g(l(10, 6, 10, 22, '#999', 2), l(18, 6, 18, 22, '#999', 2), l(6, 10, 22, 10, '#999', 2), l(6, 18, 22, 18, '#999', 2))} /></LayerCell>
                <LayerCell><Color /></LayerCell>
                <LayerName>0</LayerName>
              </LayerRow>
            </FieldBox>
            <Head $mt={9}><HeadText>圖塊清單</HeadText><HeadBtns><FloatIcon /><CloseIcon /></HeadBtns></Head>
            <RowBtns $p="5px 0 2px 36px" $hh={35} $gap={35}>
              {['eye','eyeOff','block','plus','minus'].map(n => <Tool key={n} n={n} />)}
            </RowBtns>
            <RowBtns $p="0 0 1px 49px" $hh={29} $gap={48}>
              {['pen','corners','save','blockAdd'].map(n => <Tool key={n} n={n} />)}
            </RowBtns>
            <FieldBox $grow />
          </Right>
        </Main>
        <Toolbar $h={45}>
          <Grip $r={4} />
          <TB $w={48}>Ex</TB>
          <TB $w={40}><Svg c={top.cross} /></TB>
          <TB $w={43}><Svg c={top.snapGrid} /></TB>
          <TB $on $w={44}><Svg c={top.snapEnd} /></TB>
          {['snapFree','snapOn','snapCen','snapMid','snapX'].map(n => <TB key={n}><Svg c={top[n]} /></TB>)}
          <Div $m={3} />
          {['rH','rV','rC'].map(n => <TB key={n}><Svg c={top[n]} /></TB>)}
          <Div $m={3} />
          <TB $w={45}><Svg c={top.rel} /></TB><TB><Svg c={top.relLock} /></TB>
          <End $l={2} /><Grip $l={3} $r={9} />
          {mons.map((c, i) => <TB key={i} $on={i === 0 || i === 1 || i === 3}><Svg c={c} /></TB>)}
          <End /><Grip $l={3} $r={4} />
          <TB $w={44}><Svg c={top.addCol} /></TB><TB $w={44}><Svg c={top.addRow} /></TB>
          <End $l={2} /><Grip $l={3} $r={5} />
          <TB $w={44}><Svg c={top.dimH} /></TB><TB $w={44}><Svg c={top.dimV} /></TB>
        </Toolbar>
        <Status>
          <Cell $w={191} $p={6}>-28.9756 , -10.4805</Cell>
          <Cell $w={192} $p={6}>-128.1525 , 35.4652</Cell>
          <Cell $w={306} $p={5} $t={7}>指定第一個控制點<MouseGlyph><svg width="16" height="16" viewBox="0 0 16 16"><rect x="3" y="2" width="10" height="13" rx="4" fill="#fff" stroke="#333" /><rect x="8" y="2" width="5" height="6" fill={G} stroke="#333" /></svg></MouseGlyph>取消</Cell>
          <Cell $w={49} $p={5}>選取</Cell>
          <Cell $w={77} $p={4}>選取線長</Cell>
          <Cell $w={121} $p={4}>Current Layer</Cell>
          <Cell $w={108} $p={8}>Grid Status</Cell>
        </Status>
      </Win>
      <Taskbar>
        <Slot $w={68} $t={14}><svg width="22" height="22" viewBox="0 0 22 22"><path d="M1 3l9-1.3V10H1zM11 1.5L21 0v10H11zM1 11h9v8.5L1 18zM11 11h10v10l-10-1.4z" fill="#fff" /></svg></Slot>
        <Slot $w={88} $t={17}><svg width="22" height="22"><circle cx="11" cy="10" r="8" fill="none" stroke="#fff" strokeWidth="1.6" /></svg></Slot>
        <Slot $w={44} $t={18}><svg width="24" height="20"><path d="M1 5V1h22v4" fill="none" stroke="#fff" strokeWidth="1.5" /></svg></Slot>
        <Slot $w={20} />
        <Slot $w={74}><svg width="30" height="24"><rect x="3" y="2" width="24" height="20" fill="#f4c445" /><rect x="3" y="6" width="24" height="3" fill="#ffe38a" /></svg></Slot>
        <Slot $w={74}><svg width="30" height="24"><circle cx="15" cy="15" r="14" fill="#d9483b" /><circle cx="15" cy="15" r="5" fill="#e9e9e9" /></svg></Slot>
        <Slot $w={74}><svg width="34" height="24"><rect x="1" y="2" width="32" height="22" fill="#333" stroke="#aaa" /><rect x="1" y="2" width="32" height="4" fill="#ddd" /></svg></Slot>
        <Slot $w={76} $t={4}><svg width="36" height="24"><rect width="36" height="24" rx="3" fill="#2f7fd6" /><text x="7" y="19" fontSize="15" fontWeight="700" fill="#fff" fontFamily="Liberation Sans, sans-serif">V9</text></svg></Slot>
        <Slot $w={75}><svg width="32" height="24"><path d="M4 24L16 6h14v18z" fill="#36b34a" /></svg></Slot>
        <Slot $w={75} $t={11}><svg width="32" height="24"><circle cx="16" cy="16" r="15" fill="#2c2255" stroke="#e8932c" strokeWidth="1.4" /></svg></Slot>
        <Slot $w={2} $t={0} />
        <Slot $w={74} $on $t={9}><LibreIcon s={36} /></Slot>
        <Slot $w={2} $t={0} />
        <Slot $w={74}><svg width="30" height="24"><path d="M8 3l16-3 4 24H10z" fill="#bcd6e8" /></svg></Slot>
        <Slot $w={74}><svg width="30" height="24"><path d="M8 4l16-3 3 23H9z" fill="#dfe6ee" /></svg></Slot>
        <Slot $w={461} />
        <Slot $w={40} $t={14}><svg width="18" height="20"><circle cx="9" cy="6" r="4.5" fill="none" stroke="#fff" strokeWidth="1.5" /><path d="M1 20c1-8 15-8 16 0" fill="none" stroke="#fff" strokeWidth="1.5" /></svg></Slot>
        <Slot $w={55} />
        <Slot $w={40} $t={19}><svg width="12" height="12"><path d="M4 0v12M8 0v12" stroke="#fff" strokeWidth="1.3" /></svg></Slot>
        <Slot $w={20} />
        <Slot $w={40} $t={17}><svg width="14" height="14"><path d="M12 1C3 3 3 9 6 14" fill="none" stroke="#fff" strokeWidth="1.5" /></svg></Slot>
        <Slot $w={48} $t={17}><svg width="20" height="14"><path d="M3 2l6 4M12 0c3 2 5 4 6 8" fill="none" stroke="#fff" strokeWidth="1.4" /></svg></Slot>
        <Slot $w={52} $t={20}><svg width="10" height="10"><circle cx="5" cy="5" r="4" fill="#fff" /></svg></Slot>
        <Slot $w={24} $t={18}><svg width="20" height="20"><circle cx="10" cy="10" r="10" fill="#888" /></svg></Slot>
        <Slot $w={64} $t={19}><svg width="22" height="20"><rect x="1.5" y="1.5" width="19" height="18" fill="#111" stroke="#fff" strokeWidth="3" /></svg></Slot>
        <Clock>上午 09:43</Clock>
        <Slot $w={14} />
        <Slot $w={36} $t={19}><svg width="24" height="20"><rect width="24" height="20" fill="#fff" /><rect x="5" y="5" width="14" height="3" fill="#1c2a2f" /></svg></Slot>
      </Taskbar>
      <Mark $x={179} $y={518} $w={38} $h={34} $c="#d9654a" />
      <Mark $x={140} $y={941} $w={51} $h={49} $c="#e01020" />
      <Badge $x={242} $y={535}>1</Badge><Badge $x={213} $y={970}>2</Badge><Badge $x={384} $y={372}>3</Badge><Badge $x={561} $y={653}>4</Badge>
      <Badge $x={793} $y={419}>5</Badge><Badge $x={1015} $y={548}>6</Badge><Badge $x={1297} $y={366}>7</Badge><Badge $x={1342} $y={366}>8</Badge>
    </Root>
  );
}
